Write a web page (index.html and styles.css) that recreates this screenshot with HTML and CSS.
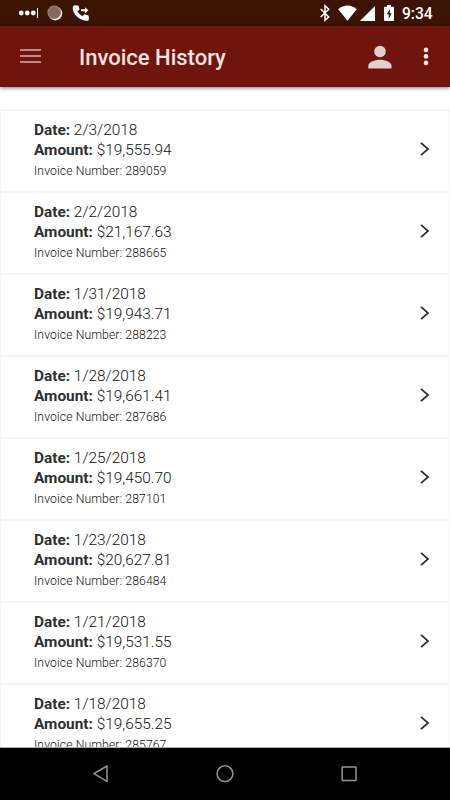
FILE: index.html
```html
<!DOCTYPE html>
<html lang="en">
<head>
<meta charset="utf-8">
<title>Invoice History</title>
<link rel="stylesheet" href="styles.css">
</head>
<body>
<div class="screen">
  <div class="status">
    <svg class="status-left" width="100" height="26" viewBox="0 0 100 26" fill="#fff">
      <circle cx="21.300" cy="13" r="2.400"/><circle cx="27.300" cy="13" r="2.400"/><circle cx="33.300" cy="13" r="2.400"/>
      <path d="M37 8h1v10h-1z"/>
      <circle cx="55.3" cy="13.4" r="7" fill="#f3e8e0"/>
      <circle cx="54.2" cy="12.3" r="6.8" fill="#83695f"/>
      <circle cx="54.2" cy="12.3" r="6.2" fill="none" stroke="#b19c93" stroke-width="1" stroke-dasharray="1 1"/>
      <path d="M75.2 5.2l2.5.2q.9 0 1.100.9l.6 2.600q.2.700-.4 1.200l-1.500 1.300q1.800 3.100 4.900 4.900l1.400-1.600q.5-.5 1.200-.3l2.900.8q.9.300.9 1.200v3.200q0 1-1 1.100C79.700 21.200 72.500 14.200 72.700 7.200q.1-2 2.500-2z"/>
      <path d="M81 9.300h4V7.200l3.300 3.100-3.300 3.100v-2.100h-4z"/>
    </svg>
    <svg width="80" height="26" viewBox="318 0 80 26" fill="#fff">
      <path d="M320.700 9l8 8-3.700 3.400V5.800l3.700 3.400-8 7.800" fill="none" stroke="#fff" stroke-width="1.500"/>
      <path d="M338.200 9.200q9.300-7.500 18.600 0L347.500 20.700z"/>
      <path d="M375 6v15h-15z"/>
      <path fill-rule="evenodd" d="M387 5h4v1.700h2q1 0 1 1V20q0 1-1 1h-8q-1 0-1-1V7.700q0-1 1-1h2zM390.200 8.800l-3.400 5.500h1.900V18.700l3-5.500H389.700z"/>
    </svg>
    <span class="clock">9:34</span>
  </div>
  <header class="bar">
    <svg width="21" height="16" viewBox="0 0 21 16" fill="#b98a86"><path d="M0 1h21v2H0zM0 7h21v2H0zM0 13h21v2H0z"/></svg>
    <h1>Invoice History</h1>
    <svg class="person" width="24" height="24" viewBox="0 0 24 24" fill="#e2d0cf"><circle cx="12" cy="6.500" r="5.800"/><path d="M.3 23.500v-2.700c0-3.700 6.800-6 11.700-6s11.500 2.300 11.500 6v2.700z"/></svg>
    <svg width="6" height="20" viewBox="0 0 6 20" fill="#f0e7e6"><circle cx="3" cy="3.900" r="2.300"/><circle cx="3" cy="10.400" r="2.300"/><circle cx="3" cy="16.900" r="2.300"/></svg>
  </header>
  <main class="list">
    <div class="row"><div><p><b>Date:</b> 2/3/2018</p><p><b>Amount:</b> $19,555.94</p><small>Invoice Number: 289059</small></div><svg class="chev" viewBox="0 0 10 14"><path d="M1 .8L8 7l-7 6.200"/></svg></div>
    <div class="row"><div><p><b>Date:</b> 2/2/2018</p><p><b>Amount:</b> $21,167.63</p><small>Invoice Number: 288665</small></div><svg class="chev" viewBox="0 0 10 14"><path d="M1 .8L8 7l-7 6.200"/></svg></div>
    <div class="row"><div><p><b>Date:</b> 1/31/2018</p><p><b>Amount:</b> $19,943.71</p><small>Invoice Number: 288223</small></div><svg class="chev" viewBox="0 0 10 14"><path d="M1 .8L8 7l-7 6.200"/></svg></div>
    <div class="row"><div><p><b>Date:</b> 1/28/2018</p><p><b>Amount:</b> $19,661.41</p><small>Invoice Number: 287686</small></div><svg class="chev" viewBox="0 0 10 14"><path d="M1 .8L8 7l-7 6.200"/></svg></div>
    <div class="row"><div><p><b>Date:</b> 1/25/2018</p><p><b>Amount:</b> $19,450.70</p><small>Invoice Number: 287101</small></div><svg class="chev" viewBox="0 0 10 14"><path d="M1 .8L8 7l-7 6.200"/></svg></div>
    <div class="row"><div><p><b>Date:</b> 1/23/2018</p><p><b>Amount:</b> $20,627.81</p><small>Invoice Number: 286484</small></div><svg class="chev" viewBox="0 0 10 14"><path d="M1 .8L8 7l-7 6.200"/></svg></div>
    <div class="row"><div><p><b>Date:</b> 1/21/2018</p><p><b>Amount:</b> $19,531.55</p><small>Invoice Number: 286370</small></div><svg class="chev" viewBox="0 0 10 14"><path d="M1 .8L8 7l-7 6.200"/></svg></div>
    <div class="row"><div><p><b>Date:</b> 1/18/2018</p><p><b>Amount:</b> $19,655.25</p><small>Invoice Number: 285767</small></div><svg class="chev" viewBox="0 0 10 14"><path d="M1 .8L8 7l-7 6.200"/></svg></div>
  </main>
  <nav class="nav">
    <svg width="450" height="52" viewBox="0 0 450 52" fill="none" stroke="#959595" stroke-width="1.500"><path d="M107 18v15.400L94 25.700z" stroke-linejoin="round"/><circle cx="225" cy="25.700" r="7.900"/><rect x="342.200" y="19" width="13.800" height="13.500" rx=".5"/></svg>
  </nav>
</div>
</body>
</html>
```
FILE: styles.css
```css
* { box-sizing: border-box; }
body { margin: 0; background: #fff; font-family: Roboto, sans-serif; }
svg { display: block; flex: none; }
.screen { display: flex; flex-direction: column; width: 450px; height: 800px; overflow: hidden; }
.status { flex: none; display: flex; height: 26px; background: #3b1405; color: #fff; }
.status-left { margin-right: 218px; }
.clock { padding-left: 4px; font-size: 15.6px; font-weight: 500; line-height: 28px; }
.bar { flex: none; display: flex; align-items: center; height: 61px; padding: 0 21px 0 20px; background: #70150d; border-bottom: 1px solid #641009; box-shadow: 0 1px 4px rgba(0,0,0,.5); z-index: 1; }
.bar h1 { flex: 1; margin: 3px 0 0 38px; color: #efe3e2; font-size: 22px; font-weight: 500; line-height: 30px; }
.person { margin: 1px 31px 0 0; }
.list { flex: 1; min-height: 0; overflow: hidden; padding-top: 22px; border-bottom: 1px solid #aaa; }
.row { display: flex; align-items: flex-start; justify-content: space-between; height: 82px; padding: 9px 19px 0 33px; border: solid #f5f5f5; border-width: 2px 1px 0; color: #111; }
.row p { margin: 0; font-size: 15.4px; font-weight: 300; line-height: 20px; white-space: nowrap; }
.row b { font-weight: 700; color: #303030; }
.row small { display: block; margin-top: 1px; font-size: 12.2px; font-weight: 300; letter-spacing: .1px; line-height: 21px; }
.chev { width: 10px; height: 14px; margin-top: 22px; fill: none; stroke: #303030; stroke-width: 1.8; }
.nav { flex: none; height: 52px; background: #000; }
```
